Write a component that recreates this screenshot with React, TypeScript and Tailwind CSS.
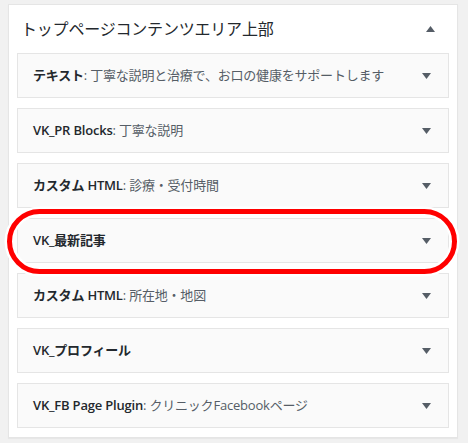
import React from "react";

type Widget = { name: string; sub?: string };

const widgets: Widget[] = [
  { name: "テキスト", sub: "丁寧な説明と治療で、お口の健康をサポートします" },
  { name: "VK_PR Blocks", sub: "丁寧な説明" },
  { name: "カスタム HTML", sub: "診療・受付時間" },
  { name: "VK_最新記事" },
  { name: "カスタム HTML", sub: "所在地・地図" },
  { name: "VK_プロフィール" },
  { name: "VK_FB Page Plugin", sub: "クリニックFacebookページ" },
];

function Triangle({ up }: { up?: boolean }) {
  return (
    <svg width="9" height="6" viewBox="0 0 9 6" className="shrink-0">
      <path d={up ? "M0 6 L4.5 0 L9 6 Z" : "M0 0 L9 0 L4.5 6 Z"} fill="#555d66" />
    </svg>
  );
}

export default function App() {
  return (
    <div
      className="relative w-[468px] h-[443px] bg-[#f1f1f1] pt-[4px] pl-[8px] overflow-hidden"
      style={{ fontFamily: '"Open Sans", "Noto Sans CJK JP", sans-serif' }}
    >
      <div className="w-[450px] bg-white border border-[#e5e5e5] shadow-[0_1px_1px_rgba(0,0,0,0.04)] pb-[9px]">
        {/* area header */}
        <div className="h-[48px] flex items-center justify-between pl-[12px] pr-[22px]">
          <h2 className="text-[16px] text-[#23282d] font-normal leading-none tracking-[-0.2px]">
            トップページコンテンツエリア上部
          </h2>
          <Triangle up />
        </div>

        <div className="flex flex-col gap-[10px] px-[8px]">
          {widgets.map((w, i) => (
            <div
              key={i}
              className="h-[45px] bg-[#fafafa] border border-[#e5e5e5] flex items-center justify-between pl-[15px] pr-[17px]"
            >
              <h3 className="text-[13px] leading-none whitespace-nowrap tracking-[-0.2px]">
                <span className="font-semibold text-[#23282d]">{w.name}</span>
                {w.sub && <span className="font-normal text-[#555d66]">: {w.sub}</span>}
              </h3>
              <Triangle />
            </div>
          ))}
        </div>
      </div>

      {/* red highlight around VK_最新記事 */}
      <svg className="absolute inset-0 pointer-events-none" width="468" height="443">
        <rect x="9.5" y="211.5" width="445" height="60" rx="30" fill="none" stroke="#ffffff" strokeWidth="10" />
        <rect x="9.5" y="211.5" width="445" height="60" rx="30" fill="none" stroke="#ff0000" strokeWidth="5" />
      </svg>
    </div>
  );
}
